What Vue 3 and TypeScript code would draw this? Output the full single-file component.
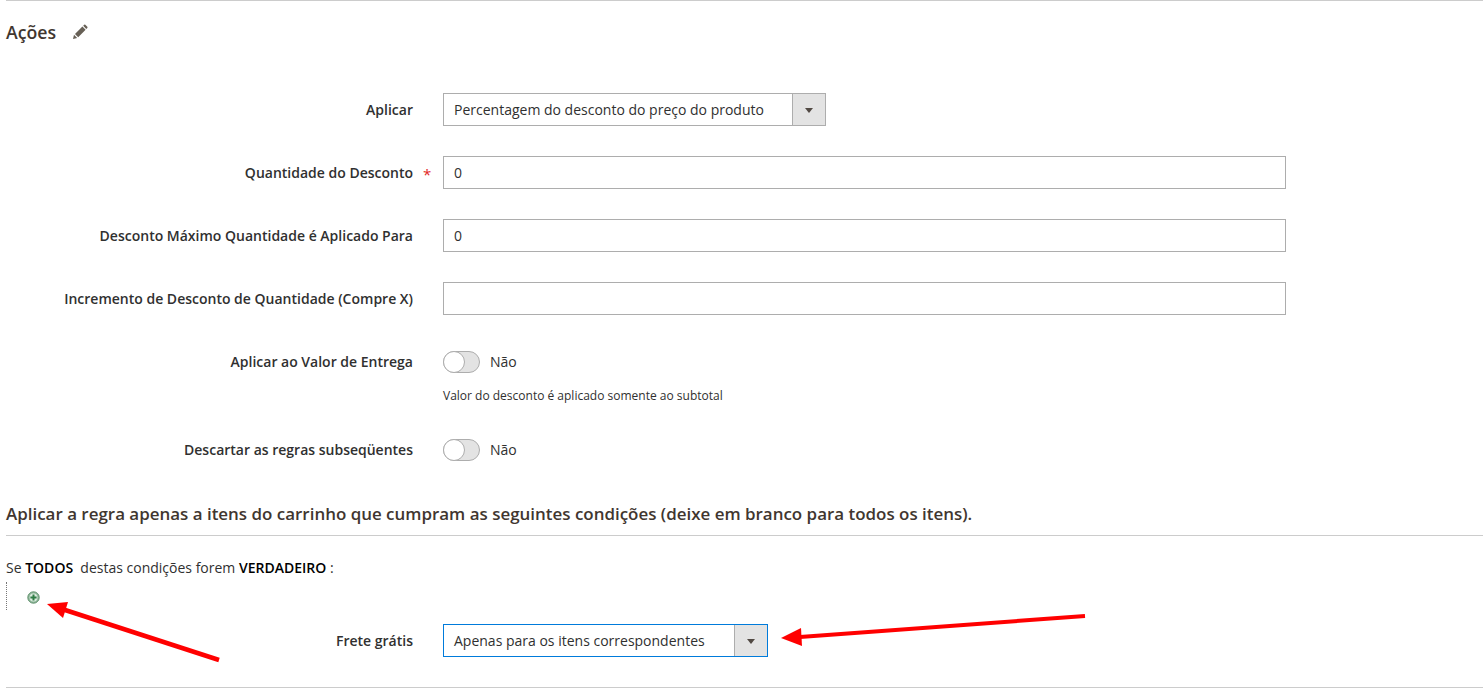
<script setup lang="ts">
const fields = [
  { label: 'Quantidade do Desconto', value: '0', required: true },
  { label: 'Desconto Máximo Quantidade é Aplicado Para', value: '0', required: false },
  { label: 'Incremento de Desconto de Quantidade (Compre X)', value: '', required: false },
]
</script>

<template>
  <div class="page">
    <div class="section-title">
      <h2>Ações</h2>
      <svg class="pencil" width="16" height="16" viewBox="0 0 16 16">
        <path d="M1 15l1-4.2 3.2 3.2zM3 10l7.4-7.4 3.2 3.2L6.2 13.2z" fill="#676056" />
        <path d="M11.2 1.8l1-1a.8.8 0 0 1 1.1 0l2 2a.8.8 0 0 1 0 1.1l-1 1z" fill="#676056" />
      </svg>
    </div>

    <div class="row first">
      <label class="label">Aplicar</label>
      <div class="select">
        <span class="select-text">Percentagem do desconto do preço do produto</span>
        <span class="select-btn"><i class="caret"></i></span>
      </div>
    </div>

    <div v-for="f in fields" :key="f.label" class="row">
      <label class="label" :class="{ required: f.required }">{{ f.label }}</label>
      <div class="input">{{ f.value }}</div>
    </div>

    <div class="row toggle-row">
      <label class="label">Aplicar ao Valor de Entrega</label>
      <div class="toggle"><span class="knob"></span></div>
      <span class="toggle-text">Não</span>
    </div>
    <p class="note">Valor do desconto é aplicado somente ao subtotal</p>

    <div class="row toggle-row discard">
      <label class="label">Descartar as regras subseqüentes</label>
      <div class="toggle"><span class="knob"></span></div>
      <span class="toggle-text">Não</span>
    </div>

    <h3 class="conditions-title">Aplicar a regra apenas a itens do carrinho que cumpram as seguintes condições (deixe em branco para todos os itens).</h3>

    <p class="rule">Se <b>TODOS</b>&nbsp; destas condições forem <b>VERDADEIRO</b> :</p>
    <div class="rule-tree">
      <svg width="13" height="13" viewBox="0 0 13 13">
        <circle cx="6.5" cy="6.5" r="5.7" fill="#8fb79a" stroke="#5f8f6c" />
        <circle cx="6.5" cy="6.5" r="3.9" fill="#dcebdf" />
        <path d="M6.5 3.4v6.2M3.4 6.5h6.2" stroke="#2f7d45" stroke-width="2" />
      </svg>
    </div>

    <div class="row free-shipping">
      <label class="label">Frete grátis</label>
      <div class="select focused">
        <span class="select-text">Apenas para os itens correspondentes</span>
        <span class="select-btn"><i class="caret"></i></span>
      </div>
    </div>

    <div class="bottom-line"></div>

    <svg class="arrows" width="1483" height="699" viewBox="0 0 1483 699">
      <path d="M219 660L62 609" stroke="#f00" stroke-width="4.5" fill="none" />
      <path d="M47 604L68 602L63 618z" fill="#f00" />
      <path d="M1085 616L800 637" stroke="#f00" stroke-width="4" fill="none" />
      <path d="M781 638L801 628L802 646z" fill="#f00" />
    </svg>
  </div>
</template>

<style scoped>
.page {
  position: relative;
  height: 699px;
  box-sizing: border-box;
  overflow: hidden;
  padding-left: 6px;
  font-family: "Open Sans", sans-serif;
  font-size: 14px;
  color: #303030;
  background: #fff;
}

.section-title {
  display: flex;
  align-items: center;
  height: 62px;
  border-top: 1px solid #ccc;
}

.section-title h2 {
  margin: 0;
  font-size: 17.7px;
  font-weight: 600;
  line-height: 62px;
  color: #41362f;
}

.pencil {
  margin-left: 16px;
}

.row {
  display: flex;
  align-items: center;
  height: 33px;
  margin-top: 30px;
}

.label {
  position: relative;
  flex: none;
  width: 407px;
  text-align: right;
  font-weight: 600;
  color: #303030;
}

.label.required::after {
  content: "*";
  position: absolute;
  left: 417px;
  top: 1px;
  color: #e22626;
  font-size: 15px;
  font-weight: 400;
}

.select,
.input {
  box-sizing: border-box;
  height: 33px;
  margin-left: 30px;
  border: 1px solid #adadad;
  background: #fff;
  line-height: 31px;
}

.input {
  width: 843px;
  padding-left: 10px;
}

.select {
  display: flex;
  width: 383px;
}

.select-text {
  flex: 1;
  padding-left: 10px;
}

.select-btn {
  display: flex;
  align-items: center;
  justify-content: center;
  box-sizing: border-box;
  width: 33px;
  background: #e3e3e3;
  border-left: 1px solid #adadad;
}

.caret {
  width: 0;
  height: 0;
  margin-top: 1px;
  border-left: 4px solid transparent;
  border-right: 4px solid transparent;
  border-top: 5px solid #514943;
}

.select.focused {
  width: 325px;
  border-color: #007bdb;
}

.toggle-row {
  height: 22px;
  margin-top: 36px;
}

.toggle-row .label,
.toggle-text {
  padding-bottom: 2px;
}

.toggle {
  position: relative;
  box-sizing: border-box;
  width: 37px;
  height: 22px;
  margin-left: 30px;
  border: 1px solid #adadad;
  border-radius: 12px;
  background: #e3e3e3;
}

.knob {
  position: absolute;
  left: -1px;
  top: -1px;
  box-sizing: border-box;
  width: 22px;
  height: 22px;
  border: 1px solid #adadad;
  border-radius: 50%;
  background: #fff;
}

.toggle-text {
  margin-left: 10px;
}

.note {
  margin: 14px 0 0 437px;
  font-size: 12px;
  line-height: 18px;
}

.toggle-row.discard {
  margin-top: 34px;
}

.conditions-title {
  margin: 42px 0 0;
  padding-bottom: 11px;
  border-bottom: 1px solid #ccc;
  font-size: 16.95px;
  font-weight: 600;
  line-height: 21px;
  color: #41362f;
}

.rule {
  margin: 22px 0 0;
  line-height: 20px;
}

.rule b {
  font-weight: 600;
  color: #000;
}

.rule-tree {
  box-sizing: border-box;
  height: 28px;
  margin-top: 4px;
  padding: 7px 0 0 20px;
  border-left: 1px dotted #777;
}

.row.free-shipping {
  margin-top: 14px;
}

.bottom-line {
  margin-top: 30px;
  border-top: 1px solid #ccc;
}

.arrows {
  position: absolute;
  left: 0;
  top: 0;
  pointer-events: none;
}
</style>
